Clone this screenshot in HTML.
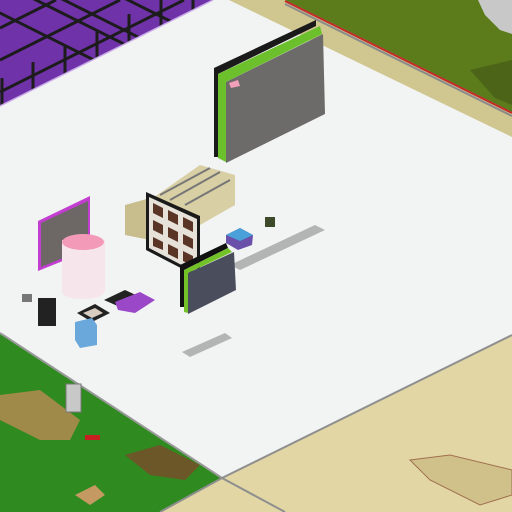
<!DOCTYPE html>
<html><head><style>html,body{margin:0;padding:0;background:#f2f3f3;}svg{display:block}</style></head>
<body>
<svg width="512" height="512" viewBox="0 0 512 512" xmlns="http://www.w3.org/2000/svg">
<defs>
<clipPath id="pc"><polygon points="0,0 213,0 0,106"/></clipPath>
</defs>
<rect width="512" height="512" fill="#f2f3f3"/>
<!-- top right grass -->
<polygon points="229,0 512,0 512,137" fill="#d0c68f"/>
<polygon points="285,0 512,0 512,112" fill="#5c7c1c"/>
<polyline points="285,1 512,113" stroke="#c42a2a" stroke-width="2" fill="none"/>
<polyline points="285,4 512,116" stroke="#8a8a8a" stroke-width="2" fill="none"/>
<polygon points="478,0 512,0 512,34 500,30 485,15" fill="#c8c8c8"/>
<polygon points="470,70 512,60 512,105 495,98" fill="#3a4c12" opacity="0.5"/>
<!-- purple blocks -->
<polygon points="0,0 213,0 0,106" fill="#7032a8"/>
<g clip-path="url(#pc)" stroke="#1c1c1c" stroke-width="3" fill="none">
<line x1="-60" y1="-17" x2="140" y2="83"/>
<line x1="-30" y1="-33" x2="170" y2="67"/>
<line x1="40" y1="-12" x2="240" y2="88"/>
<line x1="100" y1="-14" x2="300" y2="86"/>
<line x1="0" y1="60" x2="120" y2="0"/>
<line x1="0" y1="28" x2="56" y2="0"/>
<line x1="0" y1="92" x2="184" y2="0"/>
<line x1="33" y1="62" x2="33" y2="95"/>
<line x1="65" y1="46" x2="65" y2="80"/>
<line x1="97" y1="30" x2="97" y2="64"/>
<line x1="129" y1="14" x2="129" y2="48"/>
<line x1="161" y1="0" x2="161" y2="32"/>
<line x1="193" y1="0" x2="193" y2="10"/>
<line x1="2" y1="78" x2="2" y2="106"/>
</g>
<polyline points="0,106 213,0" stroke="#c8a8e8" stroke-width="1.5" fill="none"/>
<!-- bottom left grass -->
<polygon points="0,333 222,478 160,512 0,512" fill="#2f8a1f"/>
<polyline points="0,333 222,478" stroke="#999" stroke-width="2" fill="none"/>
<!-- sand -->
<polygon points="222,478 512,335 512,512 160,512" fill="#e1d6a4"/>
<polyline points="160,512 222,478 512,335" stroke="#8f8f8f" stroke-width="2" fill="none"/>
<polyline points="222,478 285,512" stroke="#8f8f8f" stroke-width="2" fill="none"/>
<!-- clutter -->
<polygon points="0,395 40,390 80,420 70,440 40,440 0,420" fill="#b48a52" opacity="0.85"/>
<polygon points="125,455 160,445 200,465 185,480 150,475" fill="#7a4a2a" opacity="0.8"/>
<polygon points="75,495 95,485 105,495 90,505" fill="#c49a62"/>
<rect x="66" y="384" width="15" height="28" fill="#c8c8c8" stroke="#777"/>
<rect x="85" y="435" width="15" height="5" fill="#c82020"/>
<polygon points="410,460 450,455 512,470 512,495 480,505 430,480" fill="#d0c08a" stroke="#a07050" stroke-width="1"/>
<!-- shadows -->
<polygon points="230,265 315,225 325,230 240,270" fill="#999" opacity="0.7"/>
<polygon points="182,352 225,333 232,338 190,357" fill="#999" opacity="0.7"/>
<!-- big wall -->
<polygon points="214,68 316,20 316,26 218,74 218,157 214,157" fill="#1a1a1a"/>
<polygon points="218,74 320,26 322,34 226,82 226,162 218,158" fill="#6cc02c"/>
<polygon points="226,82 323,34 325,114 226,163" fill="#6d6b69"/>
<polygon points="229,83 238,80 240,86 231,88" fill="#f2a0b8"/>
<!-- racks -->
<polygon points="150,200 200,165 235,175 235,205 200,225 150,230" fill="#d8cfa4"/>
<g stroke="#777" stroke-width="2"><line x1="160" y1="195" x2="210" y2="168"/><line x1="170" y1="200" x2="220" y2="172"/><line x1="185" y1="205" x2="230" y2="180"/></g>
<polygon points="125,205 150,198 150,240 125,235" fill="#c8bd8c"/>
<!-- window panel -->
<polygon points="146,192 200,216 200,278 146,250" fill="#1a1a1a"/>
<polygon points="149,197 197,219 197,273 149,248" fill="#e6e2da"/>
<g fill="#5a3424">
<polygon points="153,203 163,208 163,218 153,213"/><polygon points="168,210 178,215 178,225 168,220"/><polygon points="183,217 193,222 193,232 183,227"/>
<polygon points="153,220 163,225 163,235 153,230"/><polygon points="168,227 178,232 178,242 168,237"/><polygon points="183,234 193,239 193,249 183,244"/>
<polygon points="153,237 163,242 163,250 153,246"/><polygon points="168,244 178,249 178,259 168,254"/><polygon points="183,251 193,256 193,266 183,261"/>
</g>
<!-- small dark panel -->
<polygon points="180,265 226,243 228,248 184,270 184,307 180,307" fill="#111"/>
<polygon points="184,270 228,248 232,252 188,273 188,313 184,312" fill="#72c228"/>
<polygon points="188,273 234,252 236,290 188,314" fill="#4a4e5c"/>
<!-- magenta panel -->
<polygon points="38,221 90,196 90,250 38,271" fill="#c23ed0"/>
<polygon points="41,223 88,201 88,248 41,267" fill="#6d6866"/>
<!-- cylinder -->
<rect x="62" y="240" width="43" height="52" fill="#f6e6ec"/>
<ellipse cx="83" cy="292" rx="21" ry="7" fill="#f6e6ec"/>
<ellipse cx="83" cy="242" rx="21" ry="8" fill="#f29ab8"/>
<!-- small objects -->
<polygon points="226,235 240,228 253,235 252,245 238,250 226,243" fill="#6a50a8"/>
<polygon points="226,235 240,228 253,235 240,241" fill="#4aa0d8"/>
<rect x="265" y="217" width="10" height="10" fill="#3c4a2a"/>
<polygon points="77,313 95,304 110,313 92,322" fill="#222"/>
<polygon points="83,313 95,308 103,313 92,318" fill="#d8ccc0"/>
<polygon points="104,300 125,290 140,297 120,307" fill="#222"/>
<polygon points="115,302 140,292 155,300 135,313 118,310" fill="#9a48c8"/>
<rect x="38" y="298" width="18" height="28" fill="#222"/>
<rect x="22" y="294" width="10" height="8" fill="#777"/>
<polygon points="75,322 92,318 97,325 97,345 80,348 75,340" fill="#6aa8dc"/>
</svg>
</body></html>
